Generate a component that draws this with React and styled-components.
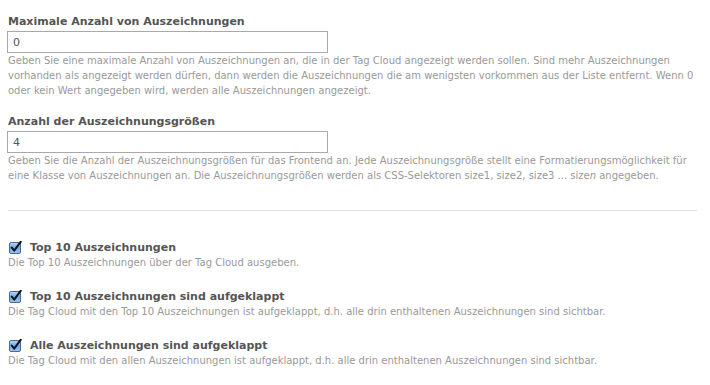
import React from "react";
import styled, { createGlobalStyle } from "styled-components";

const GlobalStyle = createGlobalStyle`
  body {
    margin: 0;
    background: #fff;
    font-family: "DejaVu Sans", Verdana, sans-serif;
  }
`;

const Page = styled.div`
  padding: 14px 13px 0 8px;
`;

const Field = styled.div`
  margin-bottom: ${(p) => p.$gap || 16}px;
`;

const Label = styled.div`
  font-size: 11px;
  line-height: 15px;
  font-weight: bold;
  color: #555;
  margin-bottom: 2px;
`;

const Input = styled.input`
  display: block;
  box-sizing: border-box;
  width: 321px;
  height: 22px;
  margin: 0 0 0 -1px;
  padding: 0 5px;
  border: 1px solid #a9a9a9;
  font-family: "DejaVu Sans", Verdana, sans-serif;
  font-size: 11px;
  color: #555;
  background: #fff;
  outline: none;
`;

const Help = styled.div`
  font-size: 10px;
  line-height: 15px;
  color: #999;
`;

const Divider = styled.hr`
  border: 0;
  border-top: 1px solid #ddd;
  margin: 0 0 29px 0;
  height: 0;
`;

const CheckItem = styled.div`
  margin-bottom: 19px;
`;

const CheckRow = styled.label`
  display: flex;
  align-items: center;
  gap: 8px;
  font-size: 11px;
  line-height: 15px;
  font-weight: bold;
  color: #555;
  padding-left: 1px;
`;

const CheckBox = () => (
  <svg width="13" height="13" viewBox="0 0 13 13">
    <defs>
      <linearGradient id="cbg" x1="0" y1="0" x2="0" y2="1">
        <stop offset="0" stopColor="#b9d7f7" />
        <stop offset="0.5" stopColor="#6ea7e8" />
        <stop offset="1" stopColor="#9cc8f5" />
      </linearGradient>
    </defs>
    <rect x="0.5" y="1.5" width="11" height="11" rx="1.5" fill="url(#cbg)" stroke="#4a6a96" />
    <path d="M2.8 6.6 L5.2 9.6 L11.8 0.6" fill="none" stroke="#111" strokeWidth="2" strokeLinecap="round" strokeLinejoin="round" />
  </svg>
);

const checks = [
  {
    title: "Top 10 Auszeichnungen",
    help: "Die Top 10 Auszeichnungen über der Tag Cloud ausgeben.",
  },
  {
    title: "Top 10 Auszeichnungen sind aufgeklappt",
    help: "Die Tag Cloud mit den Top 10 Auszeichnungen ist aufgeklappt, d.h. alle drin enthaltenen Auszeichnungen sind sichtbar.",
  },
  {
    title: "Alle Auszeichnungen sind aufgeklappt",
    help: "Die Tag Cloud mit den allen Auszeichnungen ist aufgeklappt, d.h. alle drin enthaltenen Auszeichnungen sind sichtbar.",
  },
];

const App = () => {
  return (
    <Page>
      <GlobalStyle />
      <Field>
        <Label>Maximale Anzahl von Auszeichnungen</Label>
        <Input defaultValue="0" />
        <Help>
          Geben Sie eine maximale Anzahl von Auszeichnungen an, die in der Tag Cloud angezeigt werden sollen. Sind mehr Auszeichnungen
          vorhanden als angezeigt werden dürfen, dann werden die Auszeichnungen die am wenigsten vorkommen aus der Liste entfernt. Wenn 0
          oder kein Wert angegeben wird, werden alle Auszeichnungen angezeigt.
        </Help>
      </Field>
      <Field $gap={27}>
        <Label>Anzahl der Auszeichnungsgrößen</Label>
        <Input defaultValue="4" />
        <Help>
          Geben Sie die Anzahl der Auszeichnungsgrößen für das Frontend an. Jede Auszeichnungsgröße stellt eine Formatierungsmöglichkeit für
          eine Klasse von Auszeichnungen an. Die Auszeichnungsgrößen werden als CSS-Selektoren size1, size2, size3 ... size<i>n</i> angegeben.
        </Help>
      </Field>
      <Divider />
      {checks.map((c) => (
        <CheckItem key={c.title}>
          <CheckRow>
            <CheckBox />
            {c.title}
          </CheckRow>
          <Help>{c.help}</Help>
        </CheckItem>
      ))}
    </Page>
  );
};

export default App;
